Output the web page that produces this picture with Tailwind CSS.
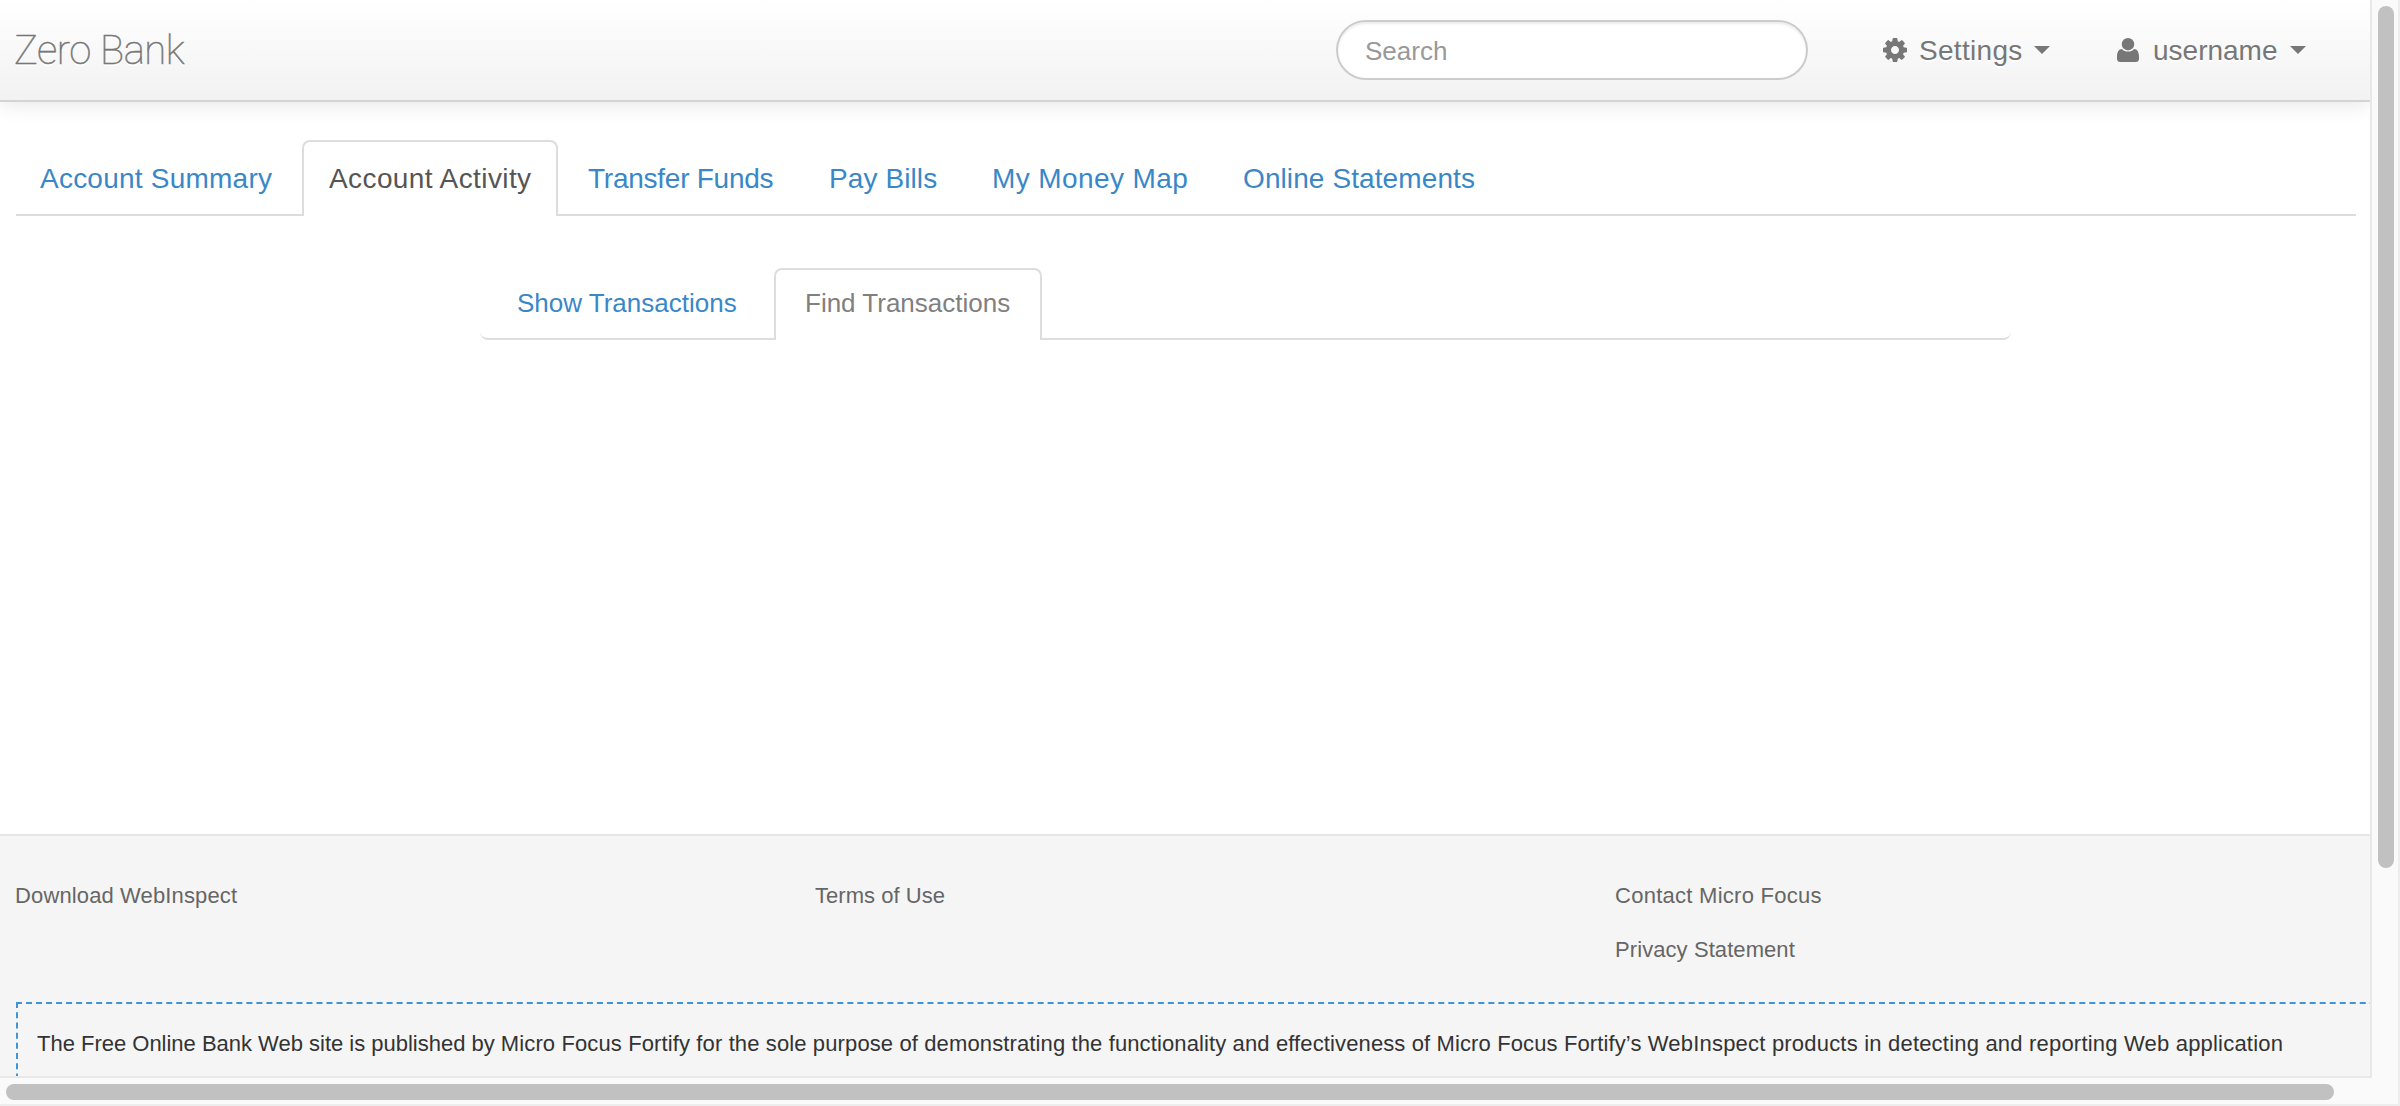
<!DOCTYPE html>
<html lang="en">
<head>
<meta charset="utf-8">
<title>Zero Bank</title>
<script src="https://cdn.jsdelivr.net/npm/@tailwindcss/browser@4"></script>
</head>
<body class="grid h-[1106px] w-[2400px] grid-cols-[2370px_30px] grid-rows-[1076px_30px] overflow-hidden bg-white font-['Liberation_Sans',Arial,sans-serif]">
  <div class="flex min-w-0 flex-col overflow-hidden">
    <header class="flex h-[102px] shrink-0 items-center border-b-2 border-[#d4d4d4] bg-linear-to-b from-white to-[#f2f2f2] pl-[14px] text-[28px] text-[#777] shadow-[0_2px_20px_rgba(0,0,0,0.1)] [text-shadow:0_2px_0_#fff]">
      <a class="w-[1322px] pt-px font-['Roboto',sans-serif] text-[40px] leading-none font-thin tracking-[-0.45px] [-webkit-text-stroke:0.5px_#777]">Zero Bank</a>
      <div class="flex h-[60px] w-[472px] items-center rounded-full border-2 border-[#ccc] bg-white pt-[2px] pl-[27px] text-[26px] text-[#999] shadow-[inset_0_2px_2px_rgba(0,0,0,0.075)] [text-shadow:none]">Search</div>
      <a class="ml-[75px] flex w-[234px] items-center whitespace-nowrap">
        <svg class="mr-3 size-6 shrink-0" viewBox="128 128 1536 1536" fill="currentColor"><path d="M1152 896q0-106-75-181t-181-75-181 75-75 181 75 181 181 75 181-75 75-181zm512-109v222q0 12-8 23t-20 13l-185 28q-19 54-39 91 35 50 107 138 10 12 10 25t-9 23q-27 37-99 108t-94 71q-12 0-26-9l-138-108q-44 23-91 38-16 136-29 186-7 28-36 28h-222q-14 0-24.5-8.5t-11.500-21.500l-28-184q-49-16-90-37l-141 107q-10 9-25 9-14 0-25-11-126-114-165-168-7-10-7-23 0-12 8-23 15-21 51-66.500t54-70.500q-27-50-41-99l-183-27q-13-2-21-12.500t-8-23.500v-222q0-12 8-23t19-13l186-28q14-46 39-92-40-57-107-138-10-12-10-24 0-10 9-23 26-36 98.500-107.500t94.500-71.500q13 0 26 10l138 107q44-23 91-38 16-136 29-186 7-28 36-28h222q14 0 24.500 8.500t11.500 21.500l28 184q49 16 90 37l142-107q9-9 24-9 13 0 25 10 129 119 165 170 7 8 7 22 0 12-8 23-15 21-51 66.500t-54 70.500q26 50 41 98l183 28q13 2 21 12.500t8 23.500z"/></svg>
        <span class="pt-px tracking-[0.3px]">Settings</span>
        <svg class="ml-[11px] h-2 w-4" viewBox="0 0 16 8" fill="currentColor"><path d="M0 0h16L8 8z"/></svg>
      </a>
      <a class="flex items-center whitespace-nowrap">
        <svg class="mr-[14px] h-6 w-[22px] shrink-0" viewBox="0 0 22 24" fill="currentColor"><circle cx="11" cy="6.200" r="6.200"/><path d="M5 11C1.800 11 0 14 0 18.500V20.500A3.500 3.500 0 0 0 3.500 24H18.500A3.500 3.500 0 0 0 22 20.500V18.500C22 14 20.200 11 17 11C15.700 12.900 13.400 13.500 11 13.500S6.300 12.900 5 11z"/></svg>
        <span class="pt-px">username</span>
        <svg class="ml-3 h-2 w-4" viewBox="0 0 16 8" fill="currentColor"><path d="M0 0h16L8 8z"/></svg>
      </a>
    </header>

    <nav class="mr-[14px] ml-4 mt-[38px] flex h-[76px] shrink-0 whitespace-nowrap text-[28px] text-[#3a87c8]">
      <a class="flex w-[286px] items-center border-b-2 border-[#ddd] pt-1 pl-[24px] tracking-[0.23px]">Account Summary</a>
      <a class="flex w-[256px] items-center rounded-t-lg border-2 border-b-0 border-[#ddd] bg-white pl-[25px] tracking-[0.4px] text-[#555]">Account Activity</a>
      <a class="flex w-[241px] items-center border-b-2 border-[#ddd] pt-1 pl-[30px] tracking-[-0.25px]">Transfer Funds</a>
      <a class="flex w-[163px] items-center border-b-2 border-[#ddd] pt-1 pl-[30px] tracking-[0.1px]">Pay Bills</a>
      <a class="flex w-[250px] items-center border-b-2 border-[#ddd] pt-1 pl-[30px] tracking-[0.4px]">My Money Map</a>
      <a class="flex grow items-center border-b-2 border-[#ddd] pt-1 pl-[31px] tracking-[0.1px]">Online Statements</a>
    </nav>

    <nav class="mt-[52px] ml-[480px] flex h-[72px] w-[1531px] shrink-0 whitespace-nowrap text-[26px] text-[#3a87c8]">
      <a class="flex w-[294px] items-center rounded-bl-lg border-b-2 border-[#ddd] pl-[37px]">Show Transactions</a>
      <a class="flex w-[268px] items-center rounded-t-lg border-2 border-b-0 border-[#ddd] bg-white pb-1 pl-[29px] text-[#808080]">Find Transactions</a>
      <div class="grow rounded-br-lg border-b-2 border-[#ddd]"></div>
    </nav>

    <footer class="mt-[494px] h-[242px] shrink-0 border-t-2 border-[#e5e5e5] bg-[#f5f5f5] pt-[33px] text-[22px] whitespace-nowrap">
      <div class="grid h-[133px] grid-cols-[800px_800px_1fr] pl-[15px] leading-[54px] text-[#666]">
        <div class="tracking-[0.13px]">Download WebInspect</div>
        <div class="tracking-[0.03px]">Terms of Use</div>
        <div>
          <div class="tracking-[0.27px]">Contact Micro Focus</div>
          <div class="tracking-[0.08px]">Privacy Statement</div>
        </div>
      </div>
      <div class="ml-4 h-[200px] w-[2500px] border-2 border-dashed border-[#3d94d6] pt-5 pl-[19px] leading-10 tracking-[0.12px] text-[#333]"><span class="tracking-[-0.01px]">The Free Online Bank Web site is published by </span>Micro Focus Fortify for the sole purpose of demonstrating the functionality and effectiveness of Micro Focus Fortify’s <span class="tracking-[0.2px]">WebInspect products in detecting and reporting Web application</span></div>
    </footer>
  </div>

  <div class="border-r-2 border-l-2 border-r-[#ededed] border-l-[#e8e8e8] bg-[#fafafa] pt-[6px] pl-[6px]">
    <div class="h-[862px] w-4 rounded-full bg-[#c1c1c1]"></div>
  </div>
  <div class="w-[2372px] border-t-2 border-b-2 border-t-[#e8e8e8] border-b-[#ededed] bg-[#fafafa] pt-[6px] pl-[6px]">
    <div class="h-4 w-[2328px] rounded-full bg-[#c1c1c1]"></div>
  </div>
  <div class="ml-[2px] border-r-2 border-b-2 border-[#ededed] bg-[#fafafa]"></div>
</body>
</html>
